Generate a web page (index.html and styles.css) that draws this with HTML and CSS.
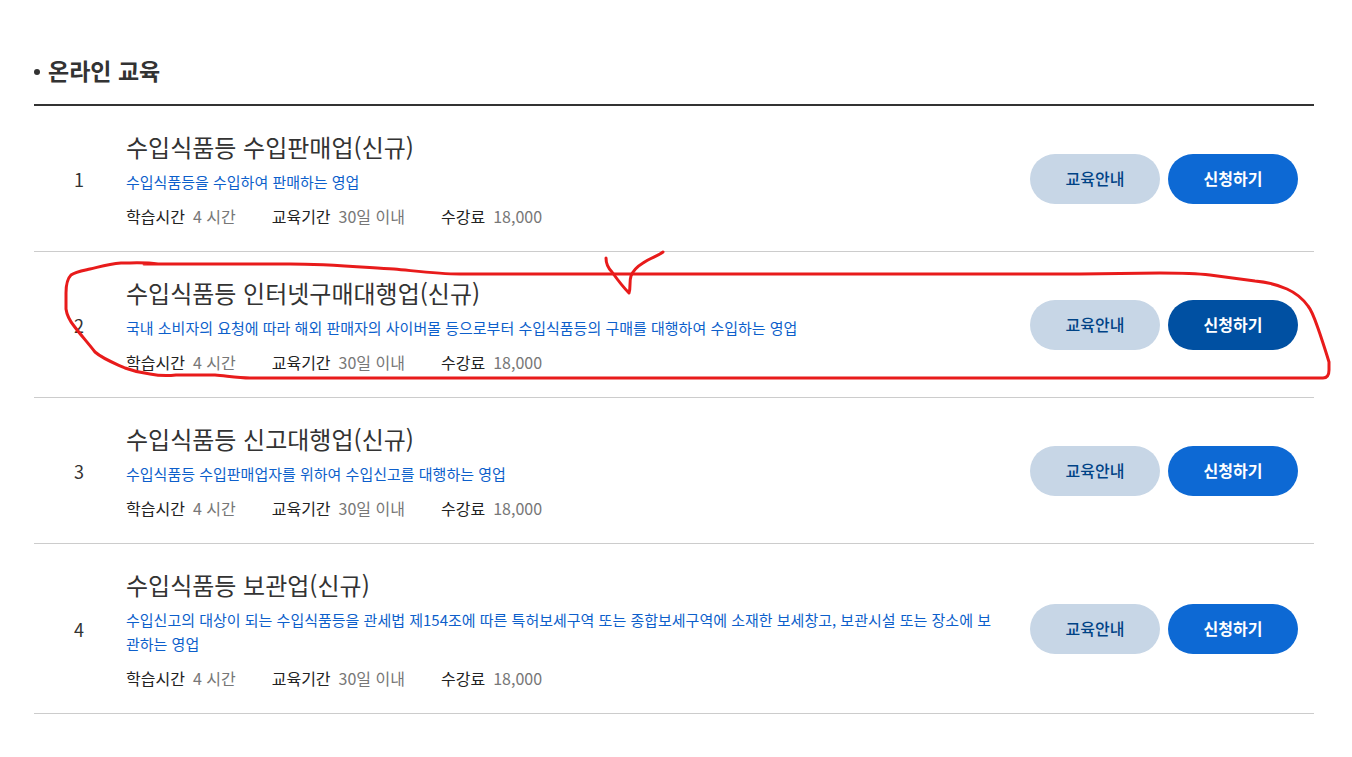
FILE: index.html
```
<!DOCTYPE html>
<html lang="ko">
<head>
    <meta charset="UTF-8">
    <meta name="viewport" content="width=device-width, initial-scale=1.0">
    <title>온라인 교육</title>
    <link rel="stylesheet" href="styles.css">
</head>
<body>
    <main class="container">
        <h1 class="section-title">온라인 교육</h1>
        <ol class="course-list">
            <li class="course">
                <span class="course-no">1</span>
                <div class="course-info">
                    <h2 class="course-name">수입식품등 수입판매업(신규)</h2>
                    <p class="course-desc">수입식품등을 수입하여 판매하는 영업</p>
                    <dl class="course-meta">
                        <div><dt>학습시간</dt><dd>4 시간</dd></div>
                        <div><dt>교육기간</dt><dd>30일 이내</dd></div>
                        <div><dt>수강료</dt><dd>18,000</dd></div>
                    </dl>
                </div>
                <div class="course-buttons">
                    <button type="button" class="btn btn-guide">교육안내</button>
                    <button type="button" class="btn btn-apply">신청하기</button>
                </div>
            </li>
            <li class="course">
                <span class="course-no">2</span>
                <div class="course-info">
                    <h2 class="course-name">수입식품등 인터넷구매대행업(신규)</h2>
                    <p class="course-desc">국내 소비자의 요청에 따라 해외 판매자의 사이버몰 등으로부터 수입식품등의 구매를 대행하여 수입하는 영업</p>
                    <dl class="course-meta">
                        <div><dt>학습시간</dt><dd>4 시간</dd></div>
                        <div><dt>교육기간</dt><dd>30일 이내</dd></div>
                        <div><dt>수강료</dt><dd>18,000</dd></div>
                    </dl>
                </div>
                <div class="course-buttons">
                    <button type="button" class="btn btn-guide">교육안내</button>
                    <button type="button" class="btn btn-apply active">신청하기</button>
                </div>
                <!-- red pen mark around the course -->
                <svg class="pen-mark" viewBox="34 252 1280 145" preserveAspectRatio="none" aria-hidden="true">
                    <path d="M158 264C145 262 133 263 121 263C108 264 99 267 90 269C81 271 75 272 71 275C67 279 66 286 66 293L66 309C67 316 70 321 74 326C80 334 88 343 95 352C103 359 114 363 125 368C133 371 142 373 150 374C160 376 168 376 176 375L215 375C227 376 238 378 250 378L1323 378C1328 378 1329 374 1329 370L1329 362C1326 352 1323 343 1320 334C1316 323 1313 312 1308 306C1303 299 1296 293 1287 289C1276 284 1266 282 1255 281L1210 275C1193 273 1177 273 1160 273L1080 274L460 274C438 274 416 271 394 269C360 267 325 264 290 264L144 264"/>
                    <path d="M606 258C606 264 608 268 612 272C617 279 623 287 629 293C631 287 629 282 631 276C633 271 638 266 643 263C650 258 658 256 663 252"/>
                </svg>
            </li>
            <li class="course">
                <span class="course-no">3</span>
                <div class="course-info">
                    <h2 class="course-name">수입식품등 신고대행업(신규)</h2>
                    <p class="course-desc">수입식품등 수입판매업자를 위하여 수입신고를 대행하는 영업</p>
                    <dl class="course-meta">
                        <div><dt>학습시간</dt><dd>4 시간</dd></div>
                        <div><dt>교육기간</dt><dd>30일 이내</dd></div>
                        <div><dt>수강료</dt><dd>18,000</dd></div>
                    </dl>
                </div>
                <div class="course-buttons">
                    <button type="button" class="btn btn-guide">교육안내</button>
                    <button type="button" class="btn btn-apply">신청하기</button>
                </div>
            </li>
            <li class="course">
                <span class="course-no">4</span>
                <div class="course-info">
                    <h2 class="course-name">수입식품등 보관업(신규)</h2>
                    <p class="course-desc">수입신고의 대상이 되는 수입식품등을 관세법 제154조에 따른 특허보세구역 또는 종합보세구역에 소재한 보세창고, 보관시설 또는 장소에 보관하는 영업</p>
                    <dl class="course-meta">
                        <div><dt>학습시간</dt><dd>4 시간</dd></div>
                        <div><dt>교육기간</dt><dd>30일 이내</dd></div>
                        <div><dt>수강료</dt><dd>18,000</dd></div>
                    </dl>
                </div>
                <div class="course-buttons">
                    <button type="button" class="btn btn-guide">교육안내</button>
                    <button type="button" class="btn btn-apply">신청하기</button>
                </div>
            </li>
        </ol>
    </main>
</body>
</html>
```

FILE: styles.css
```
* {
    box-sizing: border-box;
}
body {
    margin: 0;
    font-family: "Noto Sans CJK KR", sans-serif;
    font-size: 16px;
    line-height: 24px;
    color: #333;
    background-color: #fff;
}
h1, h2, p, ol, dl, dd {
    margin: 0;
    padding: 0;
}
.container {
    padding: 52px 38px 40px 34px;
}
.section-title {
    display: flex;
    align-items: center;
    gap: 8px;
    padding-bottom: 16px;
    border-bottom: 2px solid #333;
    font-size: 23px;
    font-weight: 700;
    line-height: 36px;
}
.section-title::before {
    content: "";
    width: 6px;
    height: 6px;
    margin-top: 4px;
    border-radius: 50%;
    background-color: #333;
}
.course-list {
    list-style: none;
}
.course {
    position: relative;
    display: flex;
    align-items: center;
    padding: 23px 16px 23px 0;
    border-bottom: 1px solid #ccc;
}
.course-no {
    flex: none;
    width: 90px;
    margin-right: 2px;
    text-align: center;
    font-size: 18px;
}
.course-info {
    flex: 1;
    padding-right: 30px;
}
.course-name {
    margin-bottom: 5px;
    font-size: 24px;
    font-weight: 400;
    line-height: 36px;
}
.course-desc {
    margin-bottom: 10px;
    font-size: 15px;
    color: #0d5fcb;
    word-break: break-all;
}
.course-meta {
    display: flex;
    gap: 36px;
}
.course-meta div {
    display: flex;
    gap: 8px;
}
.course-meta dt {
    color: #222;
}
.course-meta dd {
    color: #777;
}
.course-buttons {
    display: flex;
    flex: none;
    gap: 8px;
}
.btn {
    width: 130px;
    height: 50px;
    padding: 0 0 2px;
    border: 0;
    border-radius: 25px;
    font-family: inherit;
    font-size: 16px;
    font-weight: 500;
    cursor: pointer;
}
.btn-guide {
    color: #004386;
    background-color: #c7d6e6;
}
.btn-apply {
    font-weight: 700;
    color: #fff;
    background-color: #0d69d4;
}
.btn-apply:hover,
.btn-apply.active {
    background-color: #0050a2;
}
.pen-mark {
    position: absolute;
    top: 0;
    left: 0;
    width: 100%;
    height: 100%;
    overflow: visible;
    pointer-events: none;
}
.pen-mark path {
    fill: none;
    stroke: #e81b1b;
    stroke-width: 3;
    stroke-linecap: round;
    stroke-linejoin: round;
}
```
